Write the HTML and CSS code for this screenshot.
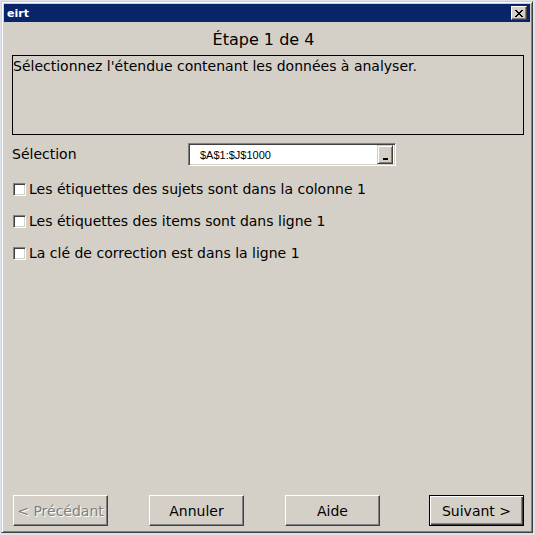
FILE: index.html
```html
<html>
<head>
  <title>eirt</title>
  <link rel="stylesheet" href="styles.css">
</head>
<body>
  <div class="window">
    <div class="titlebar">
      <span class="title">eirt</span>
      <button class="close-btn">
        <svg width="8" height="7" viewBox="0 0 8 7">
          <path d="M0 0 L7 7 M1 0 L8 7 M7 0 L0 7 M8 0 L1 7" stroke="#000" stroke-width="1" shape-rendering="crispEdges"/>
        </svg>
      </button>
    </div>

    <div class="content">
      <h1 class="step">Étape 1 de 4</h1>

      <div class="info-box">Sélectionnez l'étendue contenant les données à analyser.</div>

      <div class="range-row">
        <span class="range-label">Sélection</span>
        <div class="range-input">
          <span class="range-value">$A$1:$J$1000</span>
          <span class="range-btn"><span class="dash"></span></span>
        </div>
      </div>

      <div class="options">
        <label class="option"><span class="checkbox"></span>Les étiquettes des sujets sont dans la colonne 1</label>
        <label class="option"><span class="checkbox"></span>Les étiquettes des items sont dans ligne 1</label>
        <label class="option"><span class="checkbox"></span>La clé de correction est dans la ligne 1</label>
      </div>

      <div class="buttons">
        <button class="btn disabled">&lt; Précédant</button>
        <button class="btn">Annuler</button>
        <button class="btn">Aide</button>
        <button class="btn default">Suivant &gt;</button>
      </div>
    </div>
  </div>
</body>
</html>
```

FILE: styles.css
```css
body {
  margin: 0;
  padding: 1px;
  background: #dfe2ea;
  font-family: "DejaVu Sans", sans-serif;
  color: #000;
}

.window {
  width: 532px;
  height: 532px;
  box-sizing: border-box;
  background: #d4d0c8;
  border: 1px solid;
  border-color: #d4d0c8 #404040 #404040 #d4d0c8;
  box-shadow: inset 1px 1px #fff, inset -1px -1px #808080;
  padding: 2px;
  display: flex;
  flex-direction: column;
}

.titlebar {
  height: 18px;
  background: #0a246a;
  display: flex;
  align-items: center;
  justify-content: space-between;
  padding: 0 3px 0 3px;
}

.title {
  color: #fff;
  font-weight: bold;
  font-size: 11px;
}

.close-btn {
  width: 16px;
  height: 14px;
  padding: 0;
  background: #d4d0c8;
  border: 1px solid;
  border-color: #fff #404040 #404040 #fff;
  box-shadow: inset -1px -1px #808080;
  display: flex;
  align-items: center;
  justify-content: center;
}

.content {
  flex: 1;
  display: flex;
  flex-direction: column;
  padding: 0 6px 4px 8px;
}

.step {
  margin: 8px 0 0 0;
  padding-right: 9px;
  font-size: 16px;
  font-weight: normal;
  line-height: 20px;
  text-align: center;
}

.info-box {
  margin-top: 5px;
  height: 80px;
  box-sizing: border-box;
  border: 1px solid #000;
  font-size: 14px;
  line-height: 16px;
  padding: 2px 0 0 0;
}

.range-row {
  margin-top: 8px;
  display: flex;
  align-items: center;
  font-size: 14px;
}

.range-label {
  width: 176px;
  margin-top: -2px;
}

.range-input {
  width: 208px;
  height: 23px;
  box-sizing: border-box;
  background: #fff;
  border: 1px solid;
  border-color: #808080 #fff #fff #808080;
  box-shadow: inset 1px 1px #404040, inset -1px -1px #d4d0c8;
  display: flex;
  align-items: center;
  justify-content: space-between;
  padding: 2px 2px 2px 11px;
}

.range-value {
  font-family: "Liberation Sans", sans-serif;
  font-size: 11px;
}

.range-btn {
  width: 16px;
  height: 19px;
  box-sizing: border-box;
  background: #d4d0c8;
  border: 1px solid;
  border-color: #d4d0c8 #404040 #404040 #d4d0c8;
  box-shadow: inset 1px 1px #fff, inset -1px -1px #808080;
  display: flex;
  align-items: flex-end;
  justify-content: center;
  padding-bottom: 3px;
}

.dash {
  width: 5px;
  height: 2px;
  background: #000;
}

.options {
  margin-top: 13px;
  display: flex;
  flex-direction: column;
  gap: 12px;
}

.option {
  height: 20px;
  display: flex;
  align-items: center;
  font-size: 14px;
}

.checkbox {
  width: 13px;
  height: 13px;
  box-sizing: border-box;
  margin: 0 3px 0 1px;
  background: #fff;
  border: 1px solid;
  border-color: #808080 #fff #fff #808080;
  box-shadow: inset 1px 1px #404040, inset -1px -1px #d4d0c8;
}

.buttons {
  margin-top: auto;
  display: flex;
  gap: 41px;
  padding-left: 1px;
}

.btn {
  width: 95px;
  height: 31px;
  box-sizing: border-box;
  background: #d4d0c8;
  border: 1px solid;
  border-color: #fff #404040 #404040 #fff;
  box-shadow: inset -1px -1px #808080, inset 1px 1px #d4d0c8;
  font-family: "DejaVu Sans", sans-serif;
  font-size: 14px;
  color: #000;
  padding: 0;
}

.btn.disabled {
  color: #808080;
  text-shadow: 1px 1px #fff;
}

.btn.default {
  margin-left: auto;
  border: 1px solid #000;
  box-shadow: inset 1px 1px #fff, inset -1px -1px #404040, inset -2px -2px #808080;
}
```
